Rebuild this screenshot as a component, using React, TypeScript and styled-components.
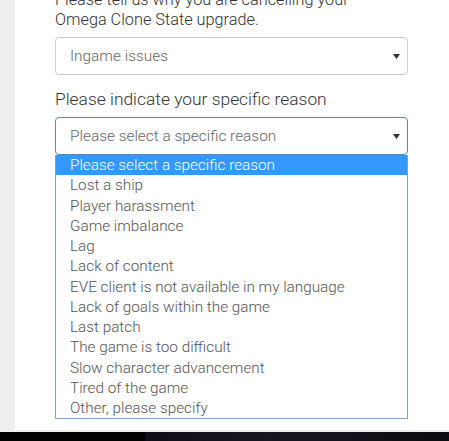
import React from 'react';
import styled, { createGlobalStyle } from 'styled-components';

const GlobalStyle = createGlobalStyle`
  html, body {
    margin: 0;
    padding: 0;
    background: #000;
  }
  * {
    box-sizing: border-box;
  }
`;

const reasons = [
  'Please select a specific reason',
  'Lost a ship',
  'Player harassment',
  'Game imbalance',
  'Lag',
  'Lack of content',
  'EVE client is not available in my language',
  'Lack of goals within the game',
  'Last patch',
  'The game is too difficult',
  'Slow character advancement',
  'Tired of the game',
  'Other, please specify',
];

const Page = styled.div`
  width: 449px;
  height: 441px;
  overflow: hidden;
  display: flex;
  flex-direction: column;
  font-family: Roboto, 'Liberation Sans', sans-serif;
  font-weight: 300;
`;

const Shell = styled.div`
  height: 432px;
  background: #efefef;
  padding: 0 0 2px 15px;
`;

const Panel = styled.div`
  height: 100%;
  background: #fff;
  overflow: hidden;
  padding: 0 41px 0 40px;
`;

const Intro = styled.p`
  margin: -10px 0 0;
  font-size: 16.3px;
  line-height: 20px;
  color: #333;
`;

const Label = styled.div`
  margin: 14px 0 8px;
  font-size: 17.4px;
  line-height: 20px;
  color: #333;
`;

const SelectBox = styled.div<{ $focused?: boolean }>`
  margin-top: ${(p) => (p.$focused ? '0' : '7px')};
  height: 38px;
  display: flex;
  align-items: center;
  justify-content: space-between;
  padding: 0 7px 0 14px;
  border: 1px solid ${(p) => (p.$focused ? '#5a87ad' : '#cccccc')};
  border-radius: 4px;
  font-size: 15.4px;
  color: #666;
`;

const Arrow = styled.svg`
  width: 7px;
  height: 5px;
  fill: #333;
`;

const Listbox = styled.ul`
  list-style: none;
  margin: 0;
  padding: 0;
  border: 1px solid #8a9fba;
  border-top: 0;
`;

const Option = styled.li<{ $active?: boolean }>`
  height: 20.25px;
  line-height: 20.25px;
  padding-left: 14px;
  font-size: 15.3px;
  white-space: nowrap;
  color: ${(p) => (p.$active ? '#fff' : '#555')};
  background: ${(p) => (p.$active ? '#3399ff' : '#fff')};
`;

const Footer = styled.div`
  height: 9px;
  display: flex;
`;

const FooterLeft = styled.div`
  width: 145px;
  background: #000;
`;

const FooterRight = styled.div`
  flex: 1;
  background: linear-gradient(90deg, #0e0e16 0%, #17161f 40%, #0c0c12 100%);
`;

const Caret = () => (
  <Arrow viewBox="0 0 7 5">
    <path d="M0 0h7L3.5 5z" />
  </Arrow>
);

export default function App() {
  return (
    <Page>
      <GlobalStyle />
      <Shell>
        <Panel>
          <Intro>
            Please tell us why you are cancelling your
            <br />
            Omega Clone State upgrade.
          </Intro>
          <SelectBox>
            <span>Ingame issues</span>
            <Caret />
          </SelectBox>
          <Label>Please indicate your specific reason</Label>
          <SelectBox $focused>
            <span>Please select a specific reason</span>
            <Caret />
          </SelectBox>
          <Listbox>
            {reasons.map((r, i) => (
              <Option key={r} $active={i === 0}>
                {r}
              </Option>
            ))}
          </Listbox>
        </Panel>
      </Shell>
      <Footer>
        <FooterLeft />
        <FooterRight />
      </Footer>
    </Page>
  );
}
